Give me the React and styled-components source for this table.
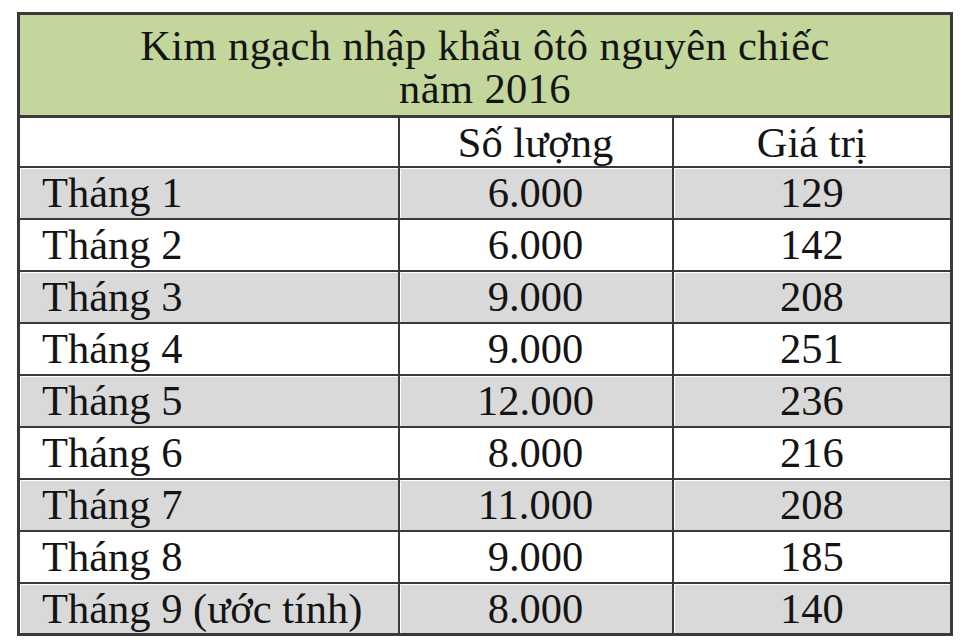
import React from 'react'
import styled, { createGlobalStyle } from 'styled-components';

const GlobalStyle = createGlobalStyle`
body {
  margin: 0;
  background: #ffffff;
}
`

export const Page = styled.div`
padding: 12px 10px 0 17px;
width: 960px;
height: 644px;
box-sizing: border-box;
background: #ffffff;
`;

export const Table = styled.table`
width: 933px;
border-collapse: collapse;
table-layout: fixed;
font-family: "Liberation Serif", "Times New Roman", serif;
font-size: 42.5px;
color: #141414;
border: 3px solid #3a3a3a;
`

export const Title = styled.th`
background-color: #c3d69b;
height: 96px;
padding: 4px 0 0 0;
font-weight: normal;
line-height: 43px;
letter-spacing: 0.4px;
text-align: center;
border: 3px solid #3a3a3a;
`

export const TR = styled.tr`
height: ${props => props.head ? '50px' : '52px'};
background-color: ${props => props.shade ? '#d9d9d9' : '#ffffff'};
`

export const TD = styled.td`
padding: 2px 0 0 ${props => props.left ? '22px' : '0'};
text-align: ${props => props.left ? 'left' : 'center'};
line-height: 1;
white-space: nowrap;
border: 2px solid #3a3a3a;
box-shadow: ${props => props.shade ? 'inset 1px 1px 0 #ffffff' : 'none'};
`

const rows = [
  ['Tháng 1', '6.000', '129'],
  ['Tháng 2', '6.000', '142'],
  ['Tháng 3', '9.000', '208'],
  ['Tháng 4', '9.000', '251'],
  ['Tháng 5', '12.000', '236'],
  ['Tháng 6', '8.000', '216'],
  ['Tháng 7', '11.000', '208'],
  ['Tháng 8', '9.000', '185'],
  ['Tháng 9 (ước tính)', '8.000', '140'],
]

const App = () => {
    return (
        <>
        <GlobalStyle />
        <Page>
            <Table>
                <colgroup>
                    <col style={{ width: '380px' }} />
                    <col style={{ width: '274px' }} />
                    <col style={{ width: '279px' }} />
                </colgroup>
                <thead>
                    <tr>
                        <Title colSpan={3}>Kim ngạch nhập khẩu ôtô nguyên chiếc<br />năm 2016</Title>
                    </tr>
                </thead>
                <tbody>
                    <TR head>
                        <TD></TD>
                        <TD>Số lượng</TD>
                        <TD>Giá trị</TD>
                    </TR>
                    {rows.map((r, i) => (
                        <TR key={r[0]} shade={i % 2 === 0}>
                            <TD left shade={i % 2 === 0}>{r[0]}</TD>
                            <TD shade={i % 2 === 0}>{r[1]}</TD>
                            <TD shade={i % 2 === 0}>{r[2]}</TD>
                        </TR>
                    ))}
                </tbody>
            </Table>
        </Page>
        </>
    )
}

export default App
